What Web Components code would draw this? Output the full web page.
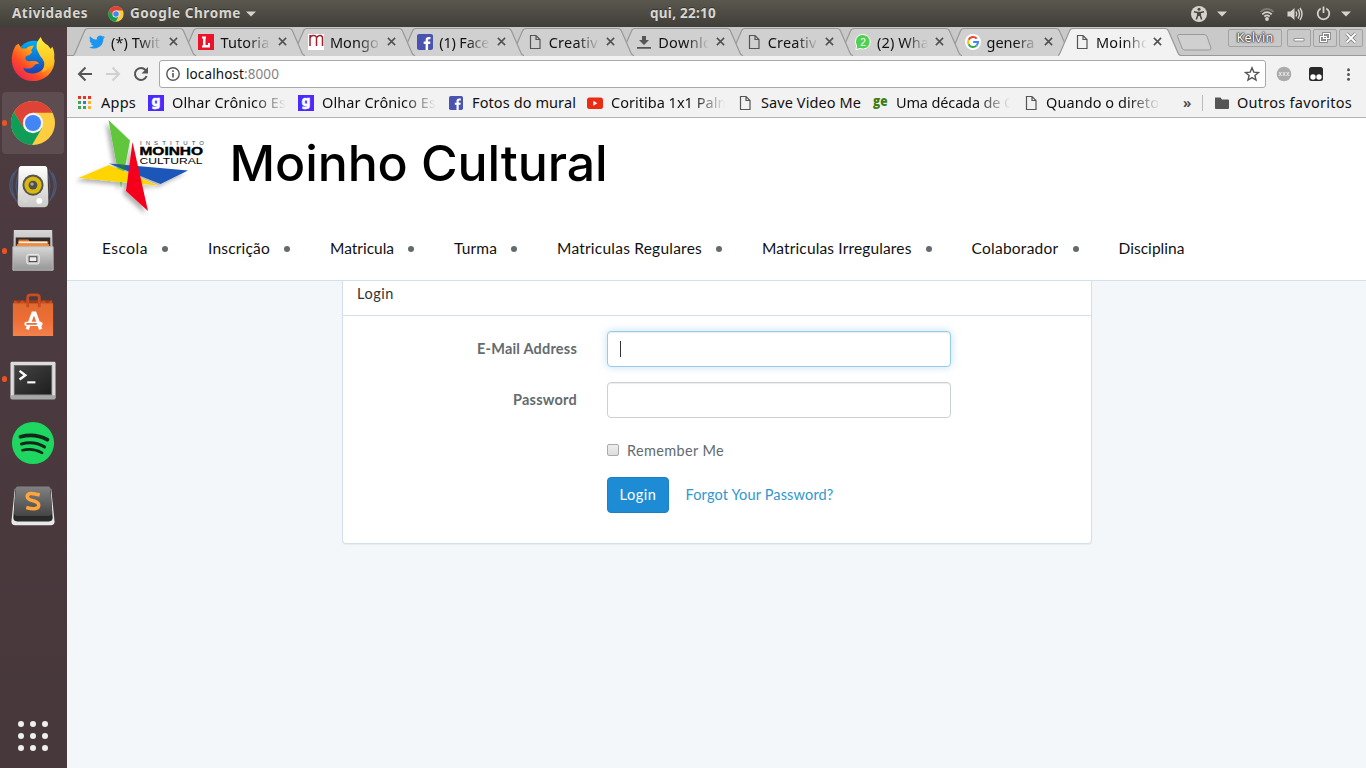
<!DOCTYPE html>
<html lang="pt-BR">
<head>
<meta charset="utf-8">
<title>Moinho Cultural</title>
<style>
html,body{margin:0;height:100%;overflow:hidden}
body{font-family:"Noto Sans","Open Sans",sans-serif;font-size:14px;color:#111}
</style>
</head>
<body>
<desktop-shell></desktop-shell>
<script>
const doc = '<svg viewBox="0 0 16 16"><path d="M3.500 1.500h5.500l4 4v9h-9.500zM9 1.500v4h4" fill="none" stroke="#555" stroke-width="1.200"/></svg>';
const chromeSvg = '<svg viewBox="0 0 46 46"><circle cx="23" cy="23" r="22" fill="#ffcd40"/><path d="M3.9 12A22 22 0 0 1 42.4 12.8H23L13.6 28.5z" fill="#dd4437"/><path d="M3.9 12A22 22 0 0 0 22 45L32.3 27.5 23 33 14 28.5z" fill="#0f9d58"/><circle cx="23" cy="23" r="10.200" fill="#f3f3f3"/><circle cx="23" cy="23" r="8" fill="#4285f4"/></svg>';
const gBox = '<svg viewBox="0 0 16 16"><path fill="#4a2bff" d="M0 0h16v16H0z"/><text x="8" y="11" text-anchor="middle" font-family="Noto Sans" font-weight="800" font-size="14" fill="#fff" stroke="#fff" stroke-width=".5">g</text></svg>';
const fb = '<svg viewBox="0 0 16 16"><rect width="16" height="16" rx="2" fill="#4a53b0"/><path d="M8.600 16V10H6.700V7.600h1.900V6c0-2 1-3.100 3-3.100h1.900v2.300h-1.300c-.9 0-1.100.4-1.100 1.100v1.300h2.300L13.100 10h-2v6z" fill="#fff"/></svg>';
const ICONS = {
 doc, chrome: chromeSvg, g: gBox, fb,
 twitter:'<svg viewBox="0 0 24 24"><path fill="#1b95f0" d="M24 4.600a10 10 0 0 1-2.800.8 5 5 0 0 0 2.100-2.700 10 10 0 0 1-3.100 1.200 4.900 4.900 0 0 0-8.400 4.500A14 14 0 0 1 1.700 3.200a4.900 4.900 0 0 0 1.500 6.500 5 5 0 0 1-2.200-.6 4.900 4.900 0 0 0 3.900 4.900 5 5 0 0 1-2.200.1 4.900 4.900 0 0 0 4.600 3.400A10 10 0 0 1 0 19.500a14 14 0 0 0 21.500-12.400A10 10 0 0 0 24 4.600z"/></svg>',
 L:'<svg viewBox="0 0 16 16"><path fill="#eb1329" d="M0 0h16v16H0z"/><path fill="#fff" d="M4 2.500h4v2H7.500v6.500h2.500V9h2v4.500H4v-2h1v-7H4z"/></svg>',
 m:'<svg viewBox="0 0 16 16"><path fill="#fff" d="M0 0h16v16H0z"/><path d="M2 12V1M2 4Q3 1 6 1.500T8.500 5v7M8.500 4Q10 1 12.500 1.500T14.500 5v7" fill="none" stroke="#a51f2a" stroke-width="1.500"/></svg>',
 down:'<svg viewBox="0 0 16 16"><path fill="#555" d="M6 2h4v4h3L8 11 3 6h3zM1 13h14v1.800H1z"/></svg>',
 whats:'<svg viewBox="0 0 16 16"><path d="M8 .5a7.300 7.300 0 1 1-3 14L.8 15.500 1.700 12A7.300 7.300 0 0 1 8 .5z" fill="#4fd052" stroke="#fff" stroke-width="1"/><text x="8" y="11.500" text-anchor="middle" font-family="Liberation Sans" font-size="10" fill="#fff">2</text></svg>',
 google:'<svg viewBox="0 0 16 16"><circle cx="8" cy="8" r="8" fill="#fff"/><g fill="none" stroke-width="2"><path d="M11.700 4.600A5 5 0 0 0 3.600 5.700" stroke="#ea4335"/><path d="M3.600 5.700a5 5 0 0 0 0 4.600" stroke="#fbbc05"/><path d="M3.600 10.300a5 5 0 0 0 7.900 1.300" stroke="#34a853"/><path d="M11.500 11.600A5 5 0 0 0 13 8H8.200" stroke="#4285f4"/></g></svg>',
 apps:'<svg viewBox="0 0 13 13"><path fill="#ea3323" d="M0 0h3v3H0zM5 0h3v3H5zM10 0h3v3h-3z"/><path fill="#3aa757" d="M0 5h3v3H0zM0 10h3v3H0z"/><path fill="#3b78e7" d="M5 5h3v3H5z"/><path fill="#fbb32d" d="M10 5h3v3h-3zM10 10h3v3h-3z"/><path fill="#3aa757" d="M5 10h3v3H5z"/></svg>',
 yt:'<svg viewBox="0 0 16 16"><rect y="2.500" width="16" height="11.500" rx="2.500" fill="#ec2b14"/><path d="M6.300 5.700v5l4-2.500z" fill="#fff"/></svg>',
 ge:'<svg viewBox="0 0 16 16"><text x="0" y="11" textLength="14.500" lengthAdjust="spacingAndGlyphs" font-family="Open Sans" font-weight="800" font-size="14" fill="#3d7d14">ge</text></svg>',
 folder:'<svg viewBox="0 0 16 16"><path fill="#555" d="M1 2.500h5.500L8 4.500h6a1 1 0 0 1 1 1V13a1 1 0 0 1-1 1H2a1 1 0 0 1-1-1z"/></svg>',
 close:'<svg viewBox="0 0 10 10"><path d="M1 1l8 8M9 1L1 9" stroke="#505050" stroke-width="1.700"/></svg>',
 back:'<svg viewBox="0 0 16 16"><path d="M15 8H2M8.500 1.500L2 8l6.500 6.500" fill="none" stroke="#555" stroke-width="2"/></svg>',
 fwd:'<svg viewBox="0 0 16 16"><path d="M1 8h13M7.500 1.500L14 8l-6.500 6.500" fill="none" stroke="#d0d0d0" stroke-width="2"/></svg>',
 reload:'<svg viewBox="0 0 16 16"><path d="M13.600 10A6 6 0 1 1 12.500 4" fill="none" stroke="#555" stroke-width="2"/><path d="M15 1v6.500H8.500z" fill="#555"/></svg>',
 info:'<svg viewBox="0 0 14 14"><circle cx="7" cy="7" r="6.200" fill="none" stroke="#555" stroke-width="1.400"/><path d="M6.200 6h1.600v4.500H6.200zM6.200 3.300h1.600v1.600H6.200z" fill="#555"/></svg>',
 star:'<svg viewBox="0 0 16 16"><path d="M8 1.800l1.800 4.300 4.700.4-3.600 3 1.100 4.600L8 11.600l-4 2.500 1.100-4.600-3.600-3 4.700-.4z" fill="none" stroke="#555" stroke-width="1.400"/></svg>',
 ext1:'<svg viewBox="0 0 16 16"><circle cx="8" cy="8" r="7.300" fill="#ababab"/><path d="M3 6l2.500 4M5.500 6L3 10M6.800 6l2.500 4M9.300 6l-2.500 4M10.500 6l2.500 4M13 6l-2.500 4" stroke="#eee" stroke-width=".9"/></svg>',
 ext2:'<svg viewBox="0 0 16 16"><rect x="1" y="1" width="14" height="14" rx="2.500" fill="#292929"/><circle cx="5" cy="11" r="2.700" fill="#fff"/><circle cx="11" cy="11" r="2.700" fill="#fff"/></svg>',
 kebab:'<svg viewBox="0 0 16 16"><g fill="#555"><circle cx="8" cy="3" r="1.600"/><circle cx="8" cy="8" r="1.600"/><circle cx="8" cy="13" r="1.600"/></g></svg>',
 caret:'<svg viewBox="0 0 10 10"><path d="M0 2.500h10L5 7.500z" fill="#d5d3cd"/></svg>',
 access:'<svg viewBox="0 0 16 16"><circle cx="8" cy="8" r="8" fill="#d5d3cd"/><circle cx="8" cy="3.200" r="1.500" fill="#4a4841"/><path d="M3 5.700l3.500.8h3l3.500-.8M6.700 6.500V9.500L5.300 13.500M9.300 6.500V9.500L10.700 13.500M8 6.500v3.500" fill="none" stroke="#4a4841" stroke-width="1.500"/></svg>',
 wifi:'<svg viewBox="0 0 16 16"><g fill="none" stroke-width="1.700"><path d="M1.500 6Q8-.2 14.500 6" stroke="#827f78"/><path d="M3.300 8.300Q8 4 12.700 8.300" stroke="#d5d3cd"/><path d="M5.300 10.500Q8 8.300 10.700 10.500" stroke="#d5d3cd"/></g><circle cx="8" cy="13" r="1.900" fill="#d5d3cd"/></svg>',
 sound:'<svg viewBox="0 0 16 16"><path d="M.5 5.500h3L7.500 2v12l-4-3.500h-3z" fill="#d5d3cd"/><path d="M9 5.500q1.500 2.500 0 5M11 3.500q3 4.500 0 9M13 2q4 6 0 12" fill="none" stroke="#d5d3cd" stroke-width="1.400"/></svg>',
 power:'<svg viewBox="0 0 16 16"><path d="M5 2.600a6.200 6.200 0 1 0 6 0M8 .5v7" fill="none" stroke="#d5d3cd" stroke-width="1.900"/></svg>',
 firefox:'<svg viewBox="0 0 48 48"><defs><linearGradient id="a" x1="1" y1="0" x2="0" y2="1"><stop offset=".1" stop-color="#ffea32"/><stop offset=".4" stop-color="#ff9a1c"/><stop offset=".65" stop-color="#ff4a25"/><stop offset="1" stop-color="#e5136e"/></linearGradient><linearGradient id="b" x1="0" y1="0" x2="0" y2="1"><stop stop-color="#00aef5"/><stop offset="1" stop-color="#1c3bb0"/></linearGradient><linearGradient id="c" x1="0" y1="0" x2="0" y2="1"><stop stop-color="#fff13a"/><stop offset="1" stop-color="#ffae18"/></linearGradient></defs><circle cx="25" cy="23" r="18" fill="url(#b)"/><path d="M6 10Q1 18 2 27C3 38 12 47 24 47s22-9 22.500-21C46 19 44 15 41 12l-4 9c2 13-6 18-14 18-7 0-9-4-9-6 4 2 9 1 11-2 1-1 2-2 5-2 0-3-5-3-8-3-3 1-6 0-6-3 0-2 2-3 4-3l3-3q0-1-1-2l3-5q-5 0-8 3l-5 0-3-5z" fill="url(#a)"/><path d="M32 1q-7 8-3 15 2 5 5 8 4 5-1 14 9-3 12-10 3-10-1-17-1 3-2 2-2-4-5-5-4-3-5-7z" fill="url(#c)"/></svg>',
 speaker:'<svg viewBox="0 0 50 50"><defs><linearGradient id="s" x2="0" y2="1"><stop stop-color="#fff"/><stop offset="1" stop-color="#c9c9c6"/></linearGradient></defs><g fill="none" stroke="#4a5873" stroke-width="1.500"><path d="M8 7Q-2 24 8 40M5 10Q-3 24 5 36M11 8Q4 24 11 38M42 7Q52 24 42 40M45 10Q53 24 45 36M39 8Q46 24 39 38"/></g><path d="M13 3h24q3 0 3 4l1 34q0 5-4 5H13q-4 0-4-5l1-34q0-4 3-4z" fill="url(#s)"/><circle cx="25" cy="23" r="11" fill="#55554e"/><circle cx="25" cy="23" r="9" fill="#d9b90f"/><circle cx="25" cy="23" r="4.600" fill="#4f4f4b"/><circle cx="24" cy="22" r="1.800" fill="#aaa"/><circle cx="17" cy="39" r="2.500" fill="#d6d6d4"/><rect x="28" y="36" width="7" height="7" rx="3" fill="#fff" stroke="#ccc"/></svg>',
 files:'<svg viewBox="0 0 48 48"><defs><linearGradient id="f" x2="0" y2="1"><stop stop-color="#d7d7d7"/><stop offset="1" stop-color="#969696"/></linearGradient></defs><path d="M4 2h40l1 42H3z" fill="url(#f)"/><path d="M6 10h36v9H6z" fill="#302b29"/><path d="M9 12h10l2 2h19v6H8z" fill="#d96f2e"/><path d="M9 14h30v2H9z" fill="#fff0d6"/><path d="M7 17h34v3H7z" fill="#f09242"/><path d="M3 19.500h42V44H3z" fill="url(#f)" stroke="#b9b9b9"/><rect x="17.500" y="27.500" width="13" height="10" rx="2" fill="#c4c4c4" stroke="#efefef"/><rect x="20" y="30" width="8" height="5" fill="#eee" stroke="#444"/></svg>',
 store:'<svg viewBox="0 0 48 48"><defs><linearGradient id="o" x2="0" y2="1"><stop stop-color="#df6b30"/><stop offset=".5" stop-color="#ee6d35"/><stop offset="1" stop-color="#f4814c"/></linearGradient></defs><path d="M4 8.500h40l1 5.500H3z" fill="#9f3c1a"/><path d="M5 8.500L3 14h42l-2-5.500-4 3.500-4-3.500-4 3.500H17l-4-3.500-4 3.500z" fill="#c94d20"/><path d="M3 12h42v34H3z" fill="url(#o)"/><path d="M18.500 16V5.500q0-2.500 3-2.500h6q3 0 3 2.500V16" fill="none" stroke="#c94d20" stroke-width="3"/><path d="M18 39l6-17h2l6 17M20 33h10" fill="none" stroke="#fff" stroke-width="3.500"/><rect x="15" y="31" width="19" height="4.500" rx="2" fill="#fff"/><path d="M17 33.300h11" stroke="#e4602c" stroke-width="1.700"/></svg>',
 terminal:'<svg viewBox="0 0 48 48"><defs><linearGradient id="t" x1="0" y1="0" x2="1" y2="1"><stop stop-color="#444"/><stop offset="1" stop-color="#1d1d1d"/></linearGradient></defs><g transform="translate(0 1)"><rect x=".5" y="5" width="47" height="39" rx="1.500" fill="#dcdcdc"/><path d="M1 40h46v4H1z" fill="#a8a8a8"/><rect x="4.500" y="9" width="39" height="30.500" fill="url(#t)" stroke="#666"/><path d="M10 14.500l6 4.500-6 4.500" fill="none" stroke="#fff" stroke-width="2.500"/><path d="M18 26.500h8.500" stroke="#fff" stroke-width="2.200"/></g></svg>',
 spotify:'<svg viewBox="0 0 48 48"><circle cx="24" cy="24" r="22" fill="#1fd660"/><g fill="none" stroke="#12281a" stroke-linecap="round"><path d="M11 17.500q15-4 28 3" stroke-width="4"/><path d="M12 25q13-3.500 24 3" stroke-width="3.300"/><path d="M13 31.500q11-2.500 20.500 2.800" stroke-width="2.800"/></g></svg>',
 sublime:'<svg viewBox="0 0 48 48"><defs><linearGradient id="u" x2="0" y2="1"><stop stop-color="#818181"/><stop offset="1" stop-color="#454545"/></linearGradient></defs><path d="M5 5h38l3.500 34q0 4-4 4h-37q-4 0-4-4z" fill="#e8e8e8"/><path d="M8 3h32q2 0 2.500 3l2 29q0 4-4 4h-33q-4 0-4-4l2-29q.5-3 2.500-3z" fill="#292929"/><path d="M8 2.500h32q2 0 2 3l2 24q0 4-4 4H8q-4 0-4-4l2-24q0-3 2-3z" fill="url(#u)"/><path d="M31 11.500q-13-4-13 1.500 0 3 6 4.500t6 4.500q0 6-13 2.500" fill="none" stroke="#ffa53c" stroke-width="3.600"/></svg>',
 grid:'<svg viewBox="0 0 30 30"><g fill="#efefee"><circle cx="3" cy="3" r="3"/><circle cx="15" cy="3" r="3"/><circle cx="27" cy="3" r="3"/><circle cx="3" cy="15" r="3"/><circle cx="15" cy="15" r="3"/><circle cx="27" cy="15" r="3"/><circle cx="3" cy="27" r="3"/><circle cx="15" cy="27" r="3"/><circle cx="27" cy="27" r="3"/></g></svg>',
 moinho:'<svg viewBox="0 0 140 102"><defs><filter id="sh" x="-20%" y="-20%" width="140%" height="140%"><feDropShadow dx="-3" dy="3" stdDeviation="2" flood-opacity=".3"/></filter></defs><g filter="url(#sh)"><path fill="#60c63a" d="M41.500 2L63 22.500 54 70.500z"/><path fill="#ffd500" d="M11.500 60L42 47 91 67.500z"/><path fill="#1c56b8" d="M42 45.500L121 52.500 93.500 66z"/><path fill="#f5001a" d="M65.500 24L81 93 59 73z"/></g><path fill="#2d6e55" d="M50.500 46.300l8 .7-.8 5z"/><g font-family="Liberation Sans"><text x="73" y="27" font-size="6" textLength="64" lengthAdjust="spacing" fill="#446">INSTITUTO</text><text x="72.500" y="37" font-size="10.500" font-weight="700" textLength="63.500" lengthAdjust="spacingAndGlyphs" stroke="#000" stroke-width=".4">MOINHO</text><text x="72.500" y="46" font-size="9.700" textLength="63" lengthAdjust="spacingAndGlyphs">CULTURAL</text></g></svg>'
};
const define = (name, css, html, after) => customElements.define(name, class extends HTMLElement {
  connectedCallback(){
    if (this.shadowRoot) return;
    const t = document.createElement('template');
    t.innerHTML = '<style>:host{display:block;box-sizing:border-box}*{box-sizing:border-box}' + css + '</style>' + (typeof html === 'function' ? html(this) : html);
    this.attachShadow({mode:'open'}).appendChild(t.content.cloneNode(true));
    if (after) after(this);
  }
});
const icon = (n, s, h) => `<ui-icon name="${n}" style="width:${s}px;height:${h||s}px"></ui-icon>`;

define('ui-icon', ':host{flex:none}svg{display:block;width:100%;height:100%;overflow:visible}', e => ICONS[e.getAttribute('name')]);

/* Text whose tracking is tuned so that it takes up the width w. */
define('fit-text', ':host{flex:none;white-space:nowrap;width:max-content}span{display:inline-block}', '<span><slot></slot></span>', e => {
  const s = e.shadowRoot.querySelector('span'), w = +e.getAttribute('w');
  const n = [...e.textContent].length, d = (w - s.getBoundingClientRect().width) / n;
  s.style.letterSpacing = d.toFixed(3) + 'px';
});

define('top-bar', `:host{height:27px;background:linear-gradient(#5a574e,#403e38);color:#d8d6d0;font:bold 13.500px/27px "Noto Sans",sans-serif;display:grid;grid-template-columns:1fr auto 1fr;text-shadow:0 -1px 0 #333}
 div{display:flex;align-items:center}.l{padding-left:12px}.r{justify-content:flex-end;padding-right:15px}`,
 `<div class="l"><fit-text w="76">Atividades</fit-text>${icon('chrome',16)}<fit-text class="n" w="111">Google Chrome</fit-text>${icon('caret',10)}</div><fit-text w="66">qui, 22:10</fit-text><div class="r">${icon('access',16)}${icon('caret',10)}${icon('wifi',16)}${icon('sound',16)}${icon('power',15)}${icon('caret',10)}</div>
 <style>.l ui-icon:nth-of-type(1){margin:0 6px 0 20px}.l ui-icon:nth-of-type(2){margin-left:5px}.r ui-icon:nth-child(2){margin:0 32px 0 10px}.r ui-icon:nth-child(4){margin:0 13px 0 12px}.r ui-icon:nth-child(6){margin-left:10px}</style>`);

define('dock-tile', `:host{width:62px;height:62px;margin-left:2px;position:relative;display:grid;place-items:center;border-radius:4px}
 :host([active]){background:#5d4d51}i{position:absolute;left:0;top:28px;width:5px;height:6px;border-radius:3px;background:#e95420}`,
 e => (e.hasAttribute('dot')?'<i></i>':'') + icon(e.getAttribute('name'), +e.getAttribute('size')||46));

define('app-dock', `:host{width:67px;background:linear-gradient(#4d3b40,#47383c);display:flex;flex-direction:column;gap:2px;padding-top:1px}
 .g{margin:auto 0 17px 18px}`,
 `<dock-tile name="firefox"></dock-tile><dock-tile name="chrome" active dot></dock-tile><dock-tile name="speaker" size="48"></dock-tile><dock-tile name="files" dot></dock-tile><dock-tile name="store"></dock-tile><dock-tile name="terminal" dot></dock-tile><dock-tile name="spotify"></dock-tile><dock-tile name="sublime"></dock-tile><div class="g">${icon('grid',30)}</div>`);

define('browser-tab', `:host{width:109.450px;height:29px;flex:none;position:relative}
 .bg{position:absolute;left:0;top:0;width:123px;height:29px}.row{position:relative;display:flex;align-items:center;height:29px;padding-left:16px}
 .t{width:56px;margin-left:6px;overflow:hidden;line-height:28px;-webkit-mask:linear-gradient(90deg,#000 28px,transparent 51px);mask:linear-gradient(90deg,#000 28px,transparent 51px)}
 .x{margin-left:1.500px}`,
 e => `<svg class="bg" viewBox="0 0 123 29"><path d="M0 29Q1 28.500 2 26L11.500 4Q12.500 1.500 15 1.500H107Q109.500 1.500 110.500 4L120 26Q121 28.500 123 29z" fill="${e.hasAttribute('active')?'#f2f2f2':'#d0d0d0'}"/><path d="M0 28.500Q1 28.500 2 26L11.500 4Q12.500 1.500 15 1.500H107Q109.500 1.500 110.500 4L120 26Q121 28.500 123 28.500" fill="none" stroke="#999" stroke-width="1.200"/></svg><div class="row">${icon(e.getAttribute('icon'),16)}<div class="t"><fit-text w="${e.getAttribute('w')}">${e.getAttribute('label')}</fit-text></div><div class="x">${icon('close',9)}</div></div>`);

const tabs = [['twitter','(*) Twit',49],['L','Tutoria',49],['m','Mongo',49],['fb','(1) Face',50],['doc','Creativ',49],['down','Downlo',54],['doc','Creativ',49],['whats','(2) Wha',52],['google','genera',48],['doc','Moinho',54]];
define('tab-strip', `:host{height:29px;background:#c9c9c9;display:flex;padding-left:6px;box-shadow:inset 0 -1px #999;font-size:14.500px}
 .new{flex:none;width:36px;height:17px;margin:7px 0 0 14px}.win{display:flex;margin:2px 3px 0 auto;gap:2px}
 .b{height:18px;width:24px;border:1px solid #a3a3a3;border-radius:2px;display:grid;place-items:center}.b.k{width:54px;margin-right:3px;font-size:12.500px;line-height:16px;color:#fff;text-shadow:0 0 2px #333,0 0 2px #333,0 0 1px #333,0 0 1px #333}
 .b svg{width:14px;height:14px}`,
 tabs.map((t,i)=>`<browser-tab icon="${t[0]}" label="${t[1]}" w="${t[2]}" ${i==9?'active':''} style="z-index:${i==9?30:20-i}"></browser-tab>`).join('') +
 `<svg class="new" style="margin-left:9px" viewBox="0 0 36 17"><path d="M3 .5h25q2 0 3 2l4 11.500q0 2-2 2H9q-2 0-3-2L1.500 2.500q0-2 1.500-2z" fill="#d0d0d0" stroke="#999"/></svg>
 <div class="win"><div class="b k"><fit-text w="37">Kelvin</fit-text></div><div class="b"><svg viewBox="0 0 14 14"><path d="M2 7.500h10v2.500H2z" fill="#fff" stroke="#777" stroke-width=".7"/></svg></div><div class="b"><svg viewBox="0 0 14 14"><path d="M5.500 2.500h6v5h-6zM2.500 5.500h6v5h-6z" fill="none" stroke="#777" stroke-width="2.700"/><path d="M5.500 2.500h6v5h-6zM2.500 5.500h6v5h-6z" fill="none" stroke="#fff" stroke-width="1.200"/></svg></div><div class="b"><svg viewBox="0 0 14 14"><path d="M2.500 2.500l9 9M11.500 2.500l-9 9" stroke="#777" stroke-width="3.200"/><path d="M2.500 2.500l9 9M11.500 2.500l-9 9" stroke="#fff" stroke-width="1.800"/></svg></div></div>`);

define('tool-bar', `:host{height:34px;background:#f2f2f2;display:flex;align-items:center;padding:2px 9px 0 10px}
 .box{height:28px;width:1107px;margin-left:10px;border:1px solid #a9a9a9;border-radius:3px;background:#fff;display:flex;align-items:center;padding:0 5px 0 6px;line-height:26px;font-size:13.500px}
 .u{color:#858585}.star{margin-left:auto}`,
 `${icon('back',16)}<span style="width:12px"></span>${icon('fwd',16)}<span style="width:12px"></span>${icon('reload',16)}<div class="box">${icon('info',14)}<fit-text style="margin-left:6px" w="58">localhost</fit-text><fit-text class="u" w="35">:8000</fit-text><div class="star">${icon('star',16)}</div></div><span style="width:10px"></span>${icon('ext1',16)}<span style="width:16px"></span>${icon('ext2',16)}<span style="width:17px"></span>${icon('kebab',15)}`);

define('book-mark', `:host{display:flex;align-items:center;flex:none}.i{flex:none}.t{flex:none;overflow:hidden}
 .f{width:122px;-webkit-mask:linear-gradient(90deg,#000 82px,transparent 114px);mask:linear-gradient(90deg,#000 82px,transparent 114px)}`,
 e => { const a=n=>e.getAttribute(n); return `<div class="i" style="width:${a('off')}px">${icon(a('icon'),+a('size')||16)}</div><div class="t ${e.hasAttribute('fade')?'f':''}"><fit-text w="${a('w')}">${a('label')}</fit-text></div>`; });

const marks = [['apps',13,23,70,'Apps',35],['g',16,24,150,'Olhar Crônico Es',114,1],['g',16,24,151,'Olhar Crônico Es',114,1],['fb',14,23,138,'Fotos do mural',104],['yt',16,24,150,'Coritiba 1x1 Palm',120,1],['doc',16,24,136,'Save Video Me',100],['ge',16,23,150,'Uma década de C',117,1],['doc',16,23,160,'Quando o direto',113,1]];
define('bookmarks-bar', `:host{height:28px;background:#f2f2f2;display:flex;align-items:center;padding:0 0 2px 11px;border-bottom:1px solid #b3b3b3;line-height:25px;font-size:14.500px}
 .m{width:19px;color:#444;font-weight:600}.s{width:12px;height:16px;border-left:1px solid #bbb}`,
 marks.map(m=>`<book-mark icon="${m[0]}" size="${m[1]}" off="${m[2]}" style="width:${m[3]}px" label="${m[4]}" w="${m[5]}" ${m[6]?'fade':''}></book-mark>`).join('') + `<span class="m">»</span><span class="s"></span><book-mark icon="folder" off="23" label="Outros favoritos" w="115"></book-mark>`);

const nav = [['Escola',46],['Inscrição',62],['Matricula',64],['Turma',43],['Matriculas Regulares',145],['Matriculas Irregulares',149.500],['Colaborador',87],['Disciplina',66]];
define('site-header', `:host{height:163px;background:#fff;border-bottom:1px solid #d3e0e9;position:relative;z-index:1;color:#000}
 .top{display:flex;height:101px}h1{margin:0 0 0 22.500px;font:500 50px/90px Inter,Lato,sans-serif}
 nav{display:flex;padding:17px 0 0 35px;font:15.500px/24px Lato,"Open Sans",sans-serif;color:#111}
 i{width:6px;height:6px;border-radius:3px;background:#636b6f;margin:10px 40px 0 14px;flex:none}`,
 `<div class="top">${icon('moinho',140,102)}<h1><fit-text w="378">Moinho Cultural</fit-text></h1></div><nav>${nav.map(n=>`<fit-text w="${n[1]}">${n[0]}</fit-text>`).join('<i></i>')}</nav>`);

define('field-row', `:host{display:grid;grid-template-columns:234px 344px;column-gap:30px;height:36px;margin-bottom:15px;line-height:36px}
 .l{justify-self:end;font-weight:700;color:#636b6f}.in{border:1px solid #ccd0d2;border-radius:4px;background:#fff;box-shadow:inset 0 1px 1px rgba(0,0,0,.075);padding:9px 12px}
 :host([focus]) .in{border-color:#98cbe8;box-shadow:inset 0 1px 1px rgba(0,0,0,.075),0 0 8px rgba(152,203,232,.6)}
 i{display:block;width:1px;height:16px;background:#333}`,
 e=>`<fit-text class="l" w="${e.getAttribute('w')}">${e.getAttribute('label')}</fit-text><div class="in">${e.hasAttribute('focus')?'<i></i>':''}</div>`);

define('login-panel', `:host{width:750px;height:264px;margin:-1px 0 0 275px;background:#fff;border:1px solid #d3e0e9;border-radius:0 0 4px 4px;box-shadow:0 1px 1px rgba(0,0,0,.05);font:14.500px/22px Lato,"Open Sans",sans-serif;color:#636b6f}
 header{height:35px;border-bottom:1px solid #d3e0e9;padding:2px 14px;color:#333}
 .body{padding-top:15px}.c,.a{display:flex;align-items:center;margin-left:264px}.c{height:22px;margin-top:22px}.a{height:36px;margin-top:15px}
 .k{width:12px;height:12px;border:1px solid #aaa;border-radius:2px;background:linear-gradient(#eee,#ddd);margin:0 8px 2px 0}
 .b{width:62px;height:36px;background:#1e8cd5;border:1px solid #1b80c4;border-radius:4px;color:#fff;display:grid;place-items:center;margin-right:16.500px}.f{color:#3097d1}`,
 `<header><fit-text w="37">Login</fit-text></header><div class="body"><field-row label="E-Mail Address" w="100" focus></field-row><field-row label="Password" w="64"></field-row><div class="c"><span class="k"></span><fit-text w="97">Remember Me</fit-text></div><div class="a"><div class="b"><fit-text w="37">Login</fit-text></div><fit-text class="f" w="148">Forgot Your Password?</fit-text></div></div>`);

define('browser-window', ':host{flex:1;background:#f3f7fa;overflow:hidden}', '<tab-strip></tab-strip><tool-bar></tool-bar><bookmarks-bar></bookmarks-bar><site-header></site-header><login-panel></login-panel>');
define('desktop-shell', ':host{height:768px;width:1366px;overflow:hidden}.m{display:flex;height:741px}', '<top-bar></top-bar><div class="m"><app-dock></app-dock><browser-window></browser-window></div>');
</script>
</body>
</html>
